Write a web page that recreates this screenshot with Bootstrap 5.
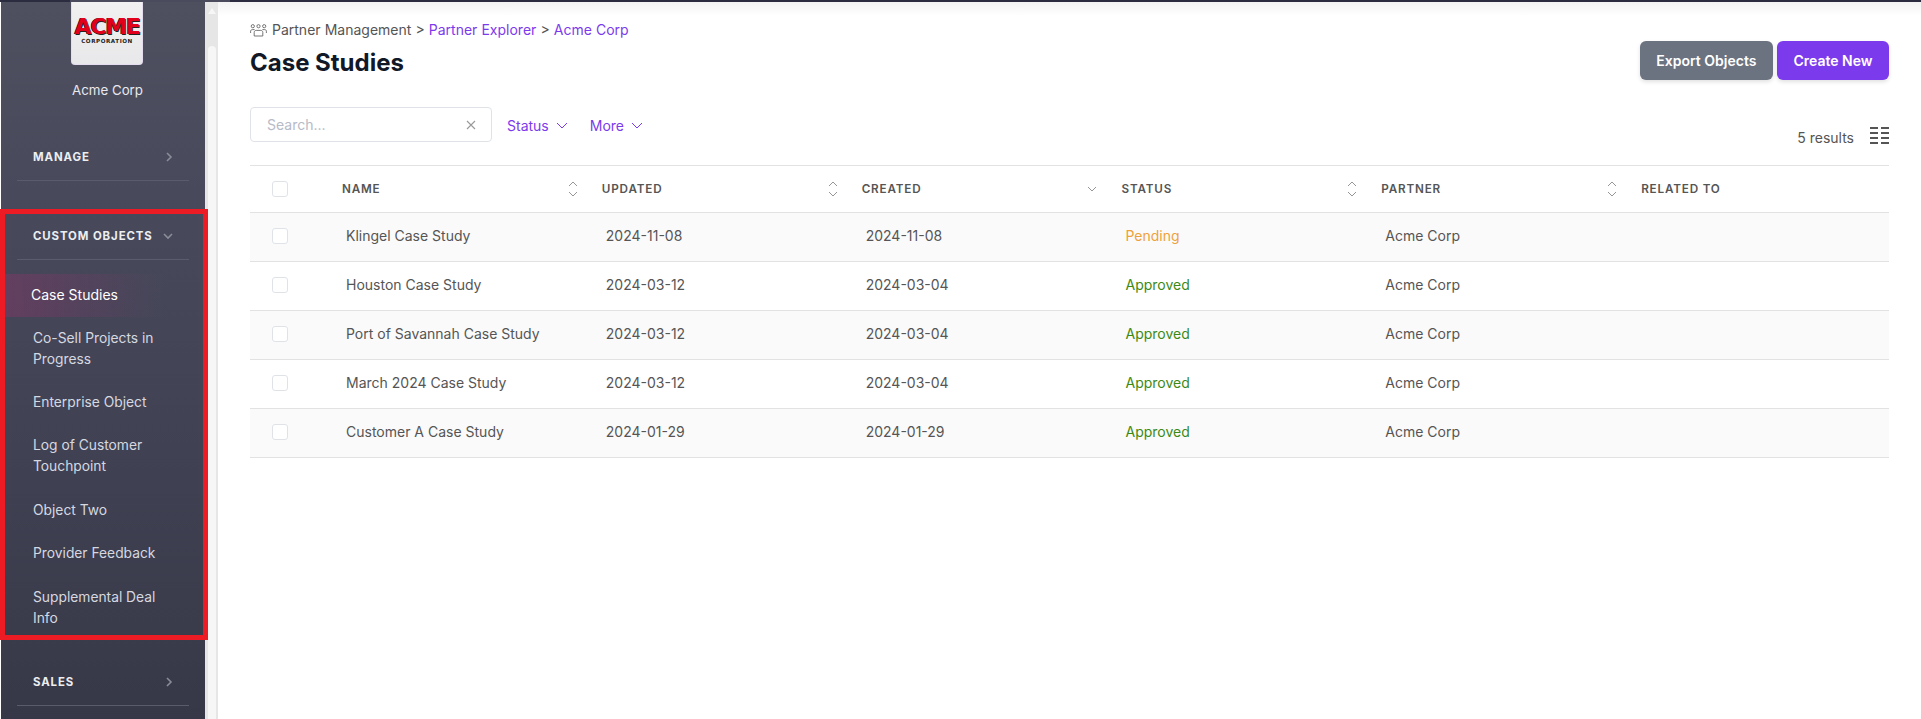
<!DOCTYPE html>
<html lang="en">
<head>
  <meta charset="UTF-8">
  <meta name="viewport" content="width=device-width, initial-scale=1.0">
  <title>Case Studies</title>
  <link href="https://cdn.jsdelivr.net/npm/bootstrap@5.3.0/dist/css/bootstrap.min.css" rel="stylesheet">
  <style>
    html, body { height: 100%; overflow: hidden; }
    body { font-family: Inter, "Noto Sans", sans-serif; font-size: 14px; line-height: 21px; color: #555; background: #fff; }
    .topline { height: 2px; background: linear-gradient(90deg, #2c2c40 70px, #4a4b5c 70px, #4a4b5c 230px, #2c2c40 230px); }
    .app-shell { height: 717px; }

    .side-panel { width: 204px; margin-left: 1px; flex: none; background: linear-gradient(180deg, #4e5060 0, #434557 50%, #373847 100%); }
    .logo-box { width: 72px; height: 63px; background: linear-gradient(180deg, #f1f1f1, #e8e8ea); border: 1px solid #e6dcf0; border-top: 0; border-radius: 0 0 4px 4px; margin-left: 70px; }
    .logo-acme { font-family: "DejaVu Sans", sans-serif; font-weight: 800; font-size: 22px; line-height: 21px; letter-spacing: -1.2px; color: #e2001a; text-shadow: 1px 1px 0 #222, -.5px 0 0 #222; margin-top: 14px; }
    .logo-corp { font-family: "DejaVu Sans", sans-serif; font-weight: 700; font-size: 5.6px; line-height: 7px; letter-spacing: .55px; color: #222; margin-top: 1px; }
    .org-name { color: #e8e8ee; font-size: 13.3px; margin-top: 15px; text-align: center; padding-left: 9px; }
    .group-head { height: 47px; margin: 0 16px; padding: 0 16px; border-bottom: 1px solid #5a5c6c; color: #eceef2; font-size: 11.4px; font-weight: 700; letter-spacing: .08em; }
    .group-head svg { flex: none; }
    .first-group { margin-top: 33px; }
    .custom-group { margin-top: 32px; position: relative; }
    .custom-group::after { content: ""; position: absolute; left: -1px; top: -4px; width: 208px; height: 431px; border: 5px solid #ed1c24; pointer-events: none; }
    .side-links { margin-top: 14px; }
    .side-links a { display: block; padding: 11.2px 30px 11px 32px; font-size: 13.8px; color: #d6d8e0; text-decoration: none; }
    .side-links a.is-current { padding: 10px 30px 11.8px 30px; font-size: 14px; color: #fff; background: linear-gradient(90deg, rgba(140, 50, 105, .42) 5px, rgba(140, 50, 105, .12) 55%, transparent 80%); }
    .side-links a:last-child { margin-top: 1px; }
    .sales-group { margin-top: 19.4px; }

    .fake-scroll { width: 13px; flex: none; background: #e6e6e6; }
    .fake-arrow { width: 0; height: 0; margin: 6px 0 0 3px; border: 4px solid transparent; border-top: 0; border-bottom: 6px solid #f6f6f6; }
    .fake-thumb { width: 8px; height: 700px; margin: 32px 0 0 3px; background: #f6f6f6; border-radius: 4px 4px 0 0; }

    .main-area { padding: 17px 32px 0; background: linear-gradient(180deg, #f3f3f3, #fff 14px) no-repeat; min-width: 0; overflow: hidden; }
    .crumbs { word-spacing: .15px; }
    .crumbs a { color: #7c3aed; text-decoration: none; }
    .crumbs svg { margin-right: 5px; vertical-align: -2px; }
    .page-title { font-size: 24px; line-height: 30px; font-weight: 700; color: #111827; margin: 8px 0 0; }
    .head-btns { margin-top: 22px; gap: 4px; }
    .head-btns .btn { height: 39px; font-size: 14px; font-weight: 600; border: 0; border-radius: 6px; padding: 0 16.5px; color: #fff; box-shadow: 0 2px 4px rgba(0, 0, 0, .12); }
    .btn-export { background: #6b7280; }
    .btn-make { background: #7c3aed; }

    .tools-row { height: 58px; margin-top: 27px; }
    .search-box { width: 242px; height: 35px; border: 1px solid #dfe3e8; border-radius: 4px; padding: 0 15px 0 16px; }
    .search-box input { border: 0; outline: 0; width: 100%; padding: 0; background: transparent; font-size: 14px; color: #555; }
    .search-box input::placeholder { color: #b7bac7; }
    .filter-link { color: #7c3aed; text-decoration: none; margin-top: 8px; }
    .filter-link svg { margin-left: 7px; vertical-align: 2px; }
    .filter-first { margin-left: -1px; }
    .filter-next { margin-left: 6px; }
    .result-side { padding-top: 20px; }
    .result-side svg { margin-left: 16px; }

    .case-table { table-layout: fixed; width: 100%; margin: 0; border-top: 1px solid #e2e2e2; --bs-table-color: #555; --bs-table-bg: transparent; }
    .case-table th, .case-table td { padding: 0 0 0 12px; vertical-align: middle; border-bottom: 1px solid #e2e2e2; box-shadow: none; }
    .case-table th { height: 47px; font-size: 11.7px; font-weight: 600; letter-spacing: .07em; text-transform: uppercase; color: #555; }
    .case-table td { height: 49px; padding: 0 0 3px 16px; }
    .case-table tbody tr:nth-child(odd) td { background: #fafafa; }
    .case-table .pick-col { width: 80px; padding-left: 22px; }
    .case-table .form-check-input { width: 16px; height: 16px; margin: 0; display: block; border-color: #dfe3e8; border-radius: 3px; }
    .sort-mark { float: right; margin: 2px 12px 0 0; }
    .tone-pending { color: #eea23a; }
    .tone-approved { color: #3c8a14; }
  </style>
</head>
<body>
  <div class="topline"></div>
  <div class="app-shell d-flex">
    <aside class="side-panel">
      <div class="logo-box text-center overflow-hidden">
        <div class="logo-acme">ACME</div>
        <div class="logo-corp">CORPORATION</div>
      </div>
      <div class="org-name">Acme Corp</div>

      <div class="group-head first-group d-flex align-items-center justify-content-between">
        <span>MANAGE</span>
        <svg width="8" height="10" viewBox="0 0 8 10"><path d="M2 1l4 4-4 4" fill="none" stroke="#8a8c98" stroke-width="1.6"/></svg>
      </div>

      <div class="custom-group">
        <div class="group-head d-flex align-items-center justify-content-between">
          <span>CUSTOM OBJECTS</span>
          <svg width="10" height="8" viewBox="0 0 10 8"><path d="M1 2l4 4 4-4" fill="none" stroke="#8a8c98" stroke-width="1.6"/></svg>
        </div>
        <nav class="side-links">
          <a href="#" class="is-current">Case Studies</a>
          <a href="#">Co-Sell Projects in Progress</a>
          <a href="#">Enterprise Object</a>
          <a href="#">Log of Customer Touchpoint</a>
          <a href="#">Object Two</a>
          <a href="#">Provider Feedback</a>
          <a href="#">Supplemental Deal Info</a>
        </nav>
      </div>

      <div class="group-head sales-group d-flex align-items-center justify-content-between">
        <span>SALES</span>
        <svg width="8" height="10" viewBox="0 0 8 10"><path d="M2 1l4 4-4 4" fill="none" stroke="#8a8c98" stroke-width="1.6"/></svg>
      </div>
    </aside>

    <div class="fake-scroll overflow-hidden">
      <div class="fake-arrow"></div>
      <div class="fake-thumb"></div>
    </div>

    <main class="main-area flex-grow-1">
      <div class="d-flex justify-content-between align-items-start">
        <div>
          <div class="crumbs">
            <svg width="17" height="13" viewBox="0 0 17 13" fill="none" stroke="#666" stroke-width=".9">
              <circle cx="2.8" cy="2.2" r="1.6"/><circle cx="8.5" cy="2.2" r="1.6"/><circle cx="14.2" cy="2.2" r="1.6"/>
              <path d="M.6 9V7.2C.6 6.2 1.4 5.6 2.4 5.6H4.6M16.4 9V7.2c0-1-.8-1.6-1.8-1.6h-2.2"/>
              <path d="M4.2 12V8.4c0-1.2 1-2 2-2h4.6c1 0 2 .8 2 2V12z"/>
            </svg>Partner Management &gt; <a href="#">Partner Explorer</a> &gt; <a href="#">Acme Corp</a>
          </div>
          <h1 class="page-title">Case Studies</h1>
        </div>
        <div class="head-btns d-flex">
          <button class="btn btn-export">Export Objects</button>
          <button class="btn btn-make">Create New</button>
        </div>
      </div>

      <div class="tools-row d-flex justify-content-between">
        <div class="d-flex align-items-start gap-3">
          <div class="search-box d-flex align-items-center">
            <input type="text" placeholder="Search...">
            <svg class="flex-shrink-0" width="10" height="10" viewBox="0 0 10 10"><path d="M1 1l8 8M9 1l-8 8" stroke="#999" stroke-width="1.1"/></svg>
          </div>
          <a href="#" class="filter-link filter-first">Status<svg width="12" height="7" viewBox="0 0 12 7"><path d="M1 1l5 5 5-5" fill="none" stroke="#7c3aed"/></svg></a>
          <a href="#" class="filter-link filter-next">More<svg width="12" height="7" viewBox="0 0 12 7"><path d="M1 1l5 5 5-5" fill="none" stroke="#7c3aed"/></svg></a>
        </div>
        <div class="result-side d-flex align-items-start">
          <span>5 results</span>
          <svg width="19" height="17" viewBox="0 0 19 17" fill="#555">
            <rect x="0" y="0" width="8" height="2"/><rect x="11" y="0" width="8" height="2"/>
            <rect x="0" y="5" width="8" height="2"/><rect x="11" y="5" width="8" height="2"/>
            <rect x="0" y="10" width="8" height="2"/><rect x="11" y="10" width="8" height="2"/>
            <rect x="0" y="15" width="8" height="2"/><rect x="11" y="15" width="8" height="2"/>
          </svg>
        </div>
      </div>

      <svg width="0" height="0" class="position-absolute">
        <symbol id="sortBoth" viewBox="0 0 10 16"><path d="M1 5l4-4 4 4M1 11l4 4 4-4" fill="none" stroke="#8a8a8a" stroke-width=".9"/></symbol>
        <symbol id="sortDown" viewBox="0 0 10 16"><path d="M1 6l4 4 4-4" fill="none" stroke="#8a8a8a" stroke-width=".9"/></symbol>
      </svg>

      <table class="table case-table">
        <thead>
          <tr>
            <th class="pick-col"><input type="checkbox" class="form-check-input"></th>
            <th>Name<svg class="sort-mark" width="10" height="16"><use href="#sortBoth"/></svg></th>
            <th>Updated<svg class="sort-mark" width="10" height="16"><use href="#sortBoth"/></svg></th>
            <th>Created<svg class="sort-mark" width="10" height="16"><use href="#sortDown"/></svg></th>
            <th>Status<svg class="sort-mark" width="10" height="16"><use href="#sortBoth"/></svg></th>
            <th>Partner<svg class="sort-mark" width="10" height="16"><use href="#sortBoth"/></svg></th>
            <th>Related To</th>
          </tr>
        </thead>
        <tbody id="caseRows"></tbody>
      </table>
    </main>
  </div>

  <script>
    const cases = [
      ["Klingel Case Study", "2024-11-08", "2024-11-08", "Pending"],
      ["Houston Case Study", "2024-03-12", "2024-03-04", "Approved"],
      ["Port of Savannah Case Study", "2024-03-12", "2024-03-04", "Approved"],
      ["March 2024 Case Study", "2024-03-12", "2024-03-04", "Approved"],
      ["Customer A Case Study", "2024-01-29", "2024-01-29", "Approved"]
    ];

    document.getElementById("caseRows").innerHTML = cases.map(c => `
      <tr>
        <td class="pick-col"><input type="checkbox" class="form-check-input"></td>
        <td>${c[0]}</td>
        <td>${c[1]}</td>
        <td>${c[2]}</td>
        <td class="tone-${c[3].toLowerCase()}">${c[3]}</td>
        <td>Acme Corp</td>
        <td></td>
      </tr>`).join("");
  </script>
  <script src="https://cdn.jsdelivr.net/npm/bootstrap@5.3.0/dist/js/bootstrap.bundle.min.js"></script>
</body>
</html>
